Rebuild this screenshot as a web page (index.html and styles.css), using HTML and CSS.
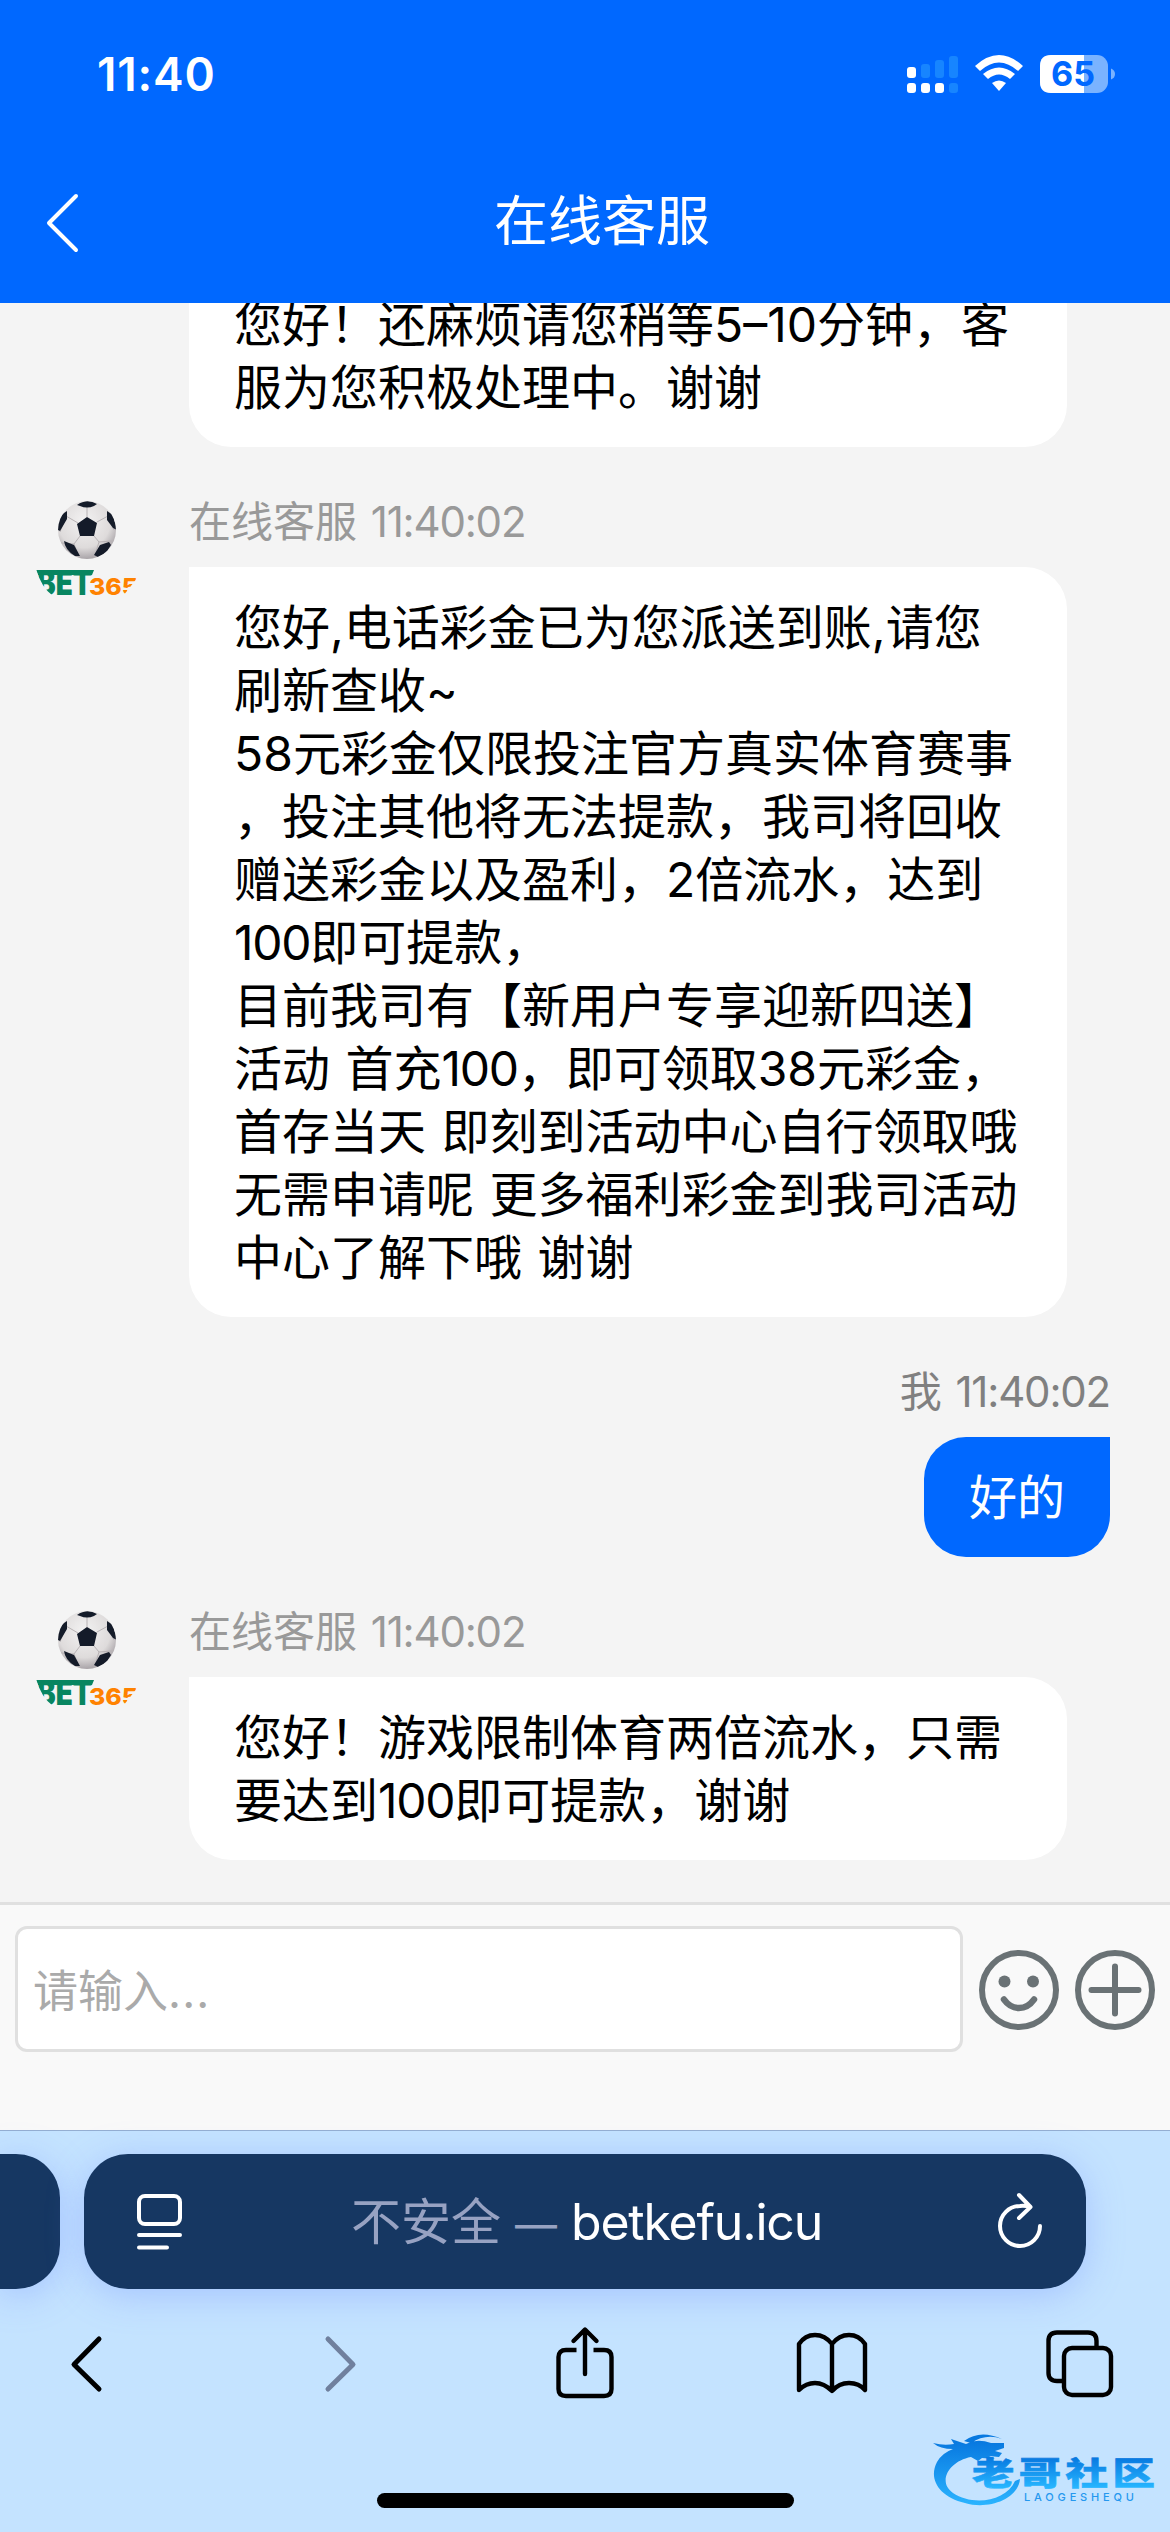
FILE: index.html
```html
<!DOCTYPE html>
<html lang="zh-CN">
<head>
<meta charset="utf-8">
<title>在线客服</title>
<link rel="stylesheet" href="styles.css">
</head>
<body>
<svg class="defs" width="0" height="0" aria-hidden="true">
  <defs>
    <radialGradient id="ballShade" cx="45%" cy="35%" r="65%">
      <stop offset="0" stop-color="#f3f2f2"/>
      <stop offset=".7" stop-color="#dedbdb"/>
      <stop offset="1" stop-color="#a9a4a8"/>
    </radialGradient>
    <clipPath id="ballClip"><circle cx="51" cy="38" r="29"/></clipPath>
    <clipPath id="logoClip"><path d="M0 77H102V85L87 104H17Q5 95 0 77Z"/></clipPath>
    <symbol id="avatar" viewBox="0 0 102 108">
      <circle cx="51" cy="38" r="29" fill="url(#ballShade)"/>
      <g clip-path="url(#ballClip)">
        <path d="M51 25V13M42 31L30 24M61 30L72 24M58 44L63 50M44 44L38 52M38 52L25 51M38 52L44 66M63 50L76 49M63 50L58 66M30 24L24 40M72 24L78 38" stroke="#b7b2b4" stroke-width="1" fill="none"/>
        <path d="M41 32L51 25L61 31L58 44H44ZM41 13Q51 6 61 12L58 14Q51 17 44 14ZM22 38Q20 25 31 19V27L24 39ZM71 19L77 23L81 38L77 36L71 28ZM28 49L38 53L44 64L39 64Q29 58 28 49ZM73 50L64 53L58 63L62 65L70 61L75 53Z" fill="#141b29"/>
      </g>
      <g clip-path="url(#logoClip)">
        <text class="logo-bet" x="1" y="103" textLength="55" lengthAdjust="spacingAndGlyphs">BET</text>
        <path d="M0 78H58L56 83H2Z" fill="#088560"/>
        <text class="logo-num" x="53" y="103" textLength="49" lengthAdjust="spacingAndGlyphs">365</text>
      </g>
    </symbol>
  </defs>
</svg>
<div class="screen">
  <header class="header">
    <div class="status">
      <span class="clock">11:40</span>
      <svg class="indicators" width="212" height="40" viewBox="905 54 212 40">
        <g fill="#fff">
          <rect x="907" y="67" width="9" height="11" rx="3"/>
          <rect x="907" y="83" width="9" height="10" rx="3"/>
          <rect x="921" y="83" width="9" height="10" rx="3"/>
          <rect x="935" y="83" width="9" height="10" rx="3"/>
        </g>
        <g fill="#1785ff">
          <rect x="921" y="64" width="9" height="14" rx="3"/>
          <rect x="935" y="60" width="9" height="18" rx="3"/>
          <rect x="949" y="56" width="9" height="22" rx="3"/>
          <rect x="949" y="83" width="9" height="10" rx="3"/>
        </g>
        <g fill="#fff">
          <path d="M975 66Q999 44 1023 66L1018 71Q999 54 980 71Z"/>
          <path d="M983 74Q999 61 1015 74L1010 79Q999 70 988 79Z"/>
          <path d="M992 83Q999 78 1006 83L999 91Z"/>
        </g>
        <rect x="1040" y="55" width="68" height="38" rx="11" fill="#7ab3ff"/>
        <path d="M1051 55H1084V93H1051Q1040 93 1040 82V66Q1040 55 1051 55Z" fill="#fff"/>
        <path d="M1111 68.500Q1115 70 1115 74T1111 79.500Z" fill="#7ab3ff"/>
        <text class="battery-level" x="1051" y="86" textLength="44" lengthAdjust="spacingAndGlyphs">65</text>
      </svg>
    </div>
    <div class="titlebar">
      <svg class="back" width="40" height="62" viewBox="0 0 40 62"><path d="M33 4L6 31L33 58" fill="none" stroke="#fff" stroke-width="4" stroke-linecap="round" stroke-linejoin="round"/></svg>
      <h1 class="title">在线客服</h1>
    </div>
  </header>

  <main class="chat">
    <section class="message">
      <div class="bubble"><p>您好！还麻烦请您稍等5–10分钟，客</p><p>服为您积极处理中。谢谢</p></div>
    </section>
    <section class="message">
      <svg class="avatar" width="102" height="108"><use href="#avatar"/></svg>
      <div class="meta">在线客服 <time>11:40:02</time></div>
      <div class="bubble">
        <p>您好,电话彩金已为您派送到账,请您</p>
        <p>刷新查收~</p>
        <p>58元彩金仅限投注官方真实体育赛事</p>
        <p>，投注其他将无法提款，我司将回收</p>
        <p>赠送彩金以及盈利，2倍流水，达到</p>
        <p><span class="num">100</span>即可提款，</p>
        <p>目前我司有【新用户专享迎新四送】</p>
        <p>活动 首充<span class="num">100</span>，即可领取38元彩金，</p>
        <p>首存当天 即刻到活动中心自行领取哦</p>
        <p>无需申请呢 更多福利彩金到我司活动</p>
        <p>中心了解下哦 谢谢</p>
      </div>
    </section>
    <section class="message mine">
      <div class="meta">我 <time>11:40:02</time></div>
      <div class="bubble"><p>好的</p></div>
    </section>
    <section class="message">
      <svg class="avatar" width="102" height="108"><use href="#avatar"/></svg>
      <div class="meta">在线客服 <time>11:40:02</time></div>
      <div class="bubble"><p>您好！游戏限制体育两倍流水，只需</p><p>要达到<span class="num">100</span>即可提款，谢谢</p></div>
    </section>
  </main>

  <div class="composer">
    <div class="input">请输入<span class="dots">...</span></div>
    <svg class="tool" width="80" height="80" viewBox="0 0 80 80" fill="none" stroke="#6a7275">
      <circle cx="40" cy="40" r="37" stroke-width="6"/>
      <circle cx="25.500" cy="31.500" r="6" fill="#6a7275" stroke="none"/><circle cx="54" cy="31.500" r="6" fill="#6a7275" stroke="none"/>
      <path d="M25 49.500Q31 58 40 58T55 49.500" stroke-width="6.500" stroke-linecap="round"/>
    </svg>
    <svg class="tool" width="80" height="80" viewBox="0 0 80 80" fill="none" stroke="#6a7275" stroke-width="6">
      <circle cx="40" cy="40" r="37"/>
      <path d="M40 16.500V63.500M16.500 40H63.500" stroke-linecap="round"/>
    </svg>
  </div>

  <footer class="browser">
    <div class="tabs">
      <div class="tab previous"></div>
      <div class="tab current">
        <svg width="46" height="56" viewBox="0 0 46 56" fill="none" stroke="#fff" stroke-width="4" stroke-linecap="round">
          <rect x="3" y="2" width="41" height="28" rx="6"/><path d="M3 41H44M3 53.500H31"/>
        </svg>
        <div class="address"><span class="insecure">不安全 <span class="dash">—</span></span><span class="domain">betkefu.icu</span></div>
        <svg width="46" height="62" viewBox="0 0 46 62" fill="none" stroke="#fff" stroke-width="4" stroke-linecap="round" stroke-linejoin="round">
          <path d="M43 35A20 20 0 1 1 23 15C27 14.500 30 15 33 16M22 4L33.500 16L22 27"/>
        </svg>
      </div>
    </div>
    <nav class="nav">
      <span class="nav-item"><svg width="34" height="58" viewBox="0 0 34 58"><path d="M30 4L5 29.500L30 54" fill="none" stroke="#000" stroke-width="5" stroke-linecap="round" stroke-linejoin="round"/></svg></span>
      <span class="nav-item forward"><svg width="34" height="58" viewBox="0 0 34 58"><path d="M4 4L29 29.500L4 54" fill="none" stroke="#70809e" stroke-width="5" stroke-linecap="round" stroke-linejoin="round"/></svg></span>
      <span class="nav-item share"><svg width="58" height="76" viewBox="0 0 58 76" fill="none" stroke="#000" stroke-width="4.400" stroke-linejoin="round">
        <path d="M20.500 24H10Q2.500 24 2.500 31V63Q2.500 70 10 70H48Q55.500 70 55.500 63V31Q55.500 24 48 24H37.500"/>
        <path d="M29 48V4M17.500 15L29 3.500L40.500 15" stroke-linecap="round"/>
      </svg></span>
      <span class="nav-item"><svg width="72" height="70" viewBox="0 0 72 70" fill="none" stroke="#000" stroke-width="4.400" stroke-linejoin="round">
        <path d="M36 15Q29 6 19 6T3 15V61Q10 54 19 54T36 62Q43 54 53 54T69 61V15Q63 6 53 6T36 15ZM36 15V62"/>
      </svg></span>
      <span class="nav-item"><svg width="68" height="68" viewBox="0 0 68 68" fill="none" stroke="#000" stroke-width="4.400">
        <rect x="18" y="18" width="47" height="47" rx="8"/><path d="M17 51H11Q2.500 51 2.500 43V11Q2.500 2.500 11 2.500H42Q50.500 2.500 50.500 11V17"/>
      </svg></span>
    </nav>
    <div class="home-indicator"></div>
    <svg class="watermark" width="232" height="92" viewBox="0 0 232 92">
      <defs><linearGradient id="wm" gradientUnits="userSpaceOnUse" x1="0" y1="15" x2="0" y2="78">
        <stop offset="0" stop-color="#0879e0"/><stop offset="1" stop-color="#2bb4ff"/></linearGradient>
        <linearGradient id="wmText" gradientUnits="userSpaceOnUse" x1="0" y1="-36" x2="0" y2="3">
        <stop offset="0" stop-color="#0879e0"/><stop offset="1" stop-color="#26b5ff"/></linearGradient></defs>
      <path fill="url(#wm)" d="M4 16Q15 19 25 17L22 12L37 17Q48 11 62 16L75 16V21L66 24L73 26L70 30L60 29L66 32L53 31L49 34L42 30C20 34 8 55 24 66C43 79 77 75 86 54L91 52C89 73 58 83 36 76C10 70 -1 52 8 35Q13 26 24 22Q11 22 4 16ZM35 14Q51 2 73 12Q57 6 42 16Z"/>
      <g transform="translate(43 58) scale(1.01 .76)"><text class="wm-name" x="0" y="0" textLength="181" fill="url(#wmText)" stroke="url(#wmText)">老哥社区</text></g>
      <text class="wm-latin" x="95" y="74" textLength="110">LAOGESHEQU</text>
    </svg>
  </footer>
</div>
</body>
</html>
```
FILE: styles.css
```css
* { box-sizing: border-box; }
body { margin: 0; background: #f4f4f4; font-family: Inter, "Noto Sans CJK SC", sans-serif; }
p, h1 { margin: 0; font-weight: 400; }
svg { display: block; flex: none; }
.defs { position: absolute; }
.screen { width: 1170px; height: 2532px; display: flex; flex-direction: column; overflow: hidden; }

.header { height: 303px; flex: none; background: #0068ff; color: #fff; }
.status { height: 148px; padding: 0 53px 0 97px; display: flex; align-items: center; justify-content: space-between; }
.clock { font-size: 46px; font-weight: 600; line-height: 60px; letter-spacing: 0.8px; }
.battery-level { font: 700 34px Inter, sans-serif; fill: #0068ff; }
.titlebar { height: 150px; padding: 0 43px; display: flex; align-items: center; }
.title { flex: 1; margin: -10px 0 0 2px; padding-right: 8px; text-align: center; font-family: "Noto Sans CJK SC", sans-serif; font-size: 54px; line-height: 80px; }

.chat { height: 1599px; flex: none; padding-bottom: 42px; display: flex; flex-direction: column; justify-content: flex-end; gap: 45px; overflow: hidden; }
.message { display: grid; grid-template-columns: 153px 878px; padding-left: 36px; }
.message > * { grid-column: 2; }
.message .avatar { grid-column: 1; grid-row: 1 / span 2; }
.meta { font-size: 42px; line-height: 60px; margin-bottom: 15px; color: #999; white-space: nowrap; word-spacing: 2px; }
.meta time { letter-spacing: -1.2px; }
.bubble { padding: 28.5px 45px; border-radius: 0 42px 42px 42px; background: #fff; color: #000; font-size: 48px; line-height: 63px; white-space: nowrap; word-spacing: 2px; text-spacing-trim: space-all; }
.bubble p { height: 63px; }
.num { letter-spacing: -1.3px; }
.mine { display: flex; flex-direction: column; align-items: flex-end; padding: 0 60px 0 0; }
.mine .meta { color: #808080; }
.mine .bubble { border-radius: 42px 0 42px 42px; background: #0068ff; color: #fff; }

.composer { height: 228px; flex: none; padding: 21px 15px 0; display: flex; align-items: flex-start; border-top: 3px solid #e0e0e0; background: #f9f9f9; }
.input { width: 948px; height: 126px; padding: 0 15px; border: 3px solid #e0e0e0; border-radius: 12px; background: #fff; color: #aaa; font-size: 45px; line-height: 126px; }
.dots { letter-spacing: 1.2px; }
.tool { margin: 24px 0 0 16px; }

.browser { position: relative; height: 402px; flex: none; padding-top: 23px; border-top: 1px solid #94aed2; background: #c4e3ff; display: flex; flex-direction: column; }
.tabs { display: flex; gap: 24px; }
.tab { height: 135px; background: #163762; box-shadow: 0 6px 36px rgba(120, 150, 255, .4); }
.previous { width: 60px; border-radius: 0 44px 44px 0; }
.current { width: 1002px; padding: 0 43px 0 52px; border-radius: 44px; display: flex; align-items: center; justify-content: space-between; }
.address { display: flex; gap: 14px; padding: 3px 6px 0 0; font-size: 50px; line-height: 70px; color: #fff; white-space: nowrap; }
.insecure { color: #97a2c2; }
.dash { font-size: 42px; }
.domain { letter-spacing: -1.2px; }
.nav { height: 144px; padding: 0 54px 0 50px; margin-top: 3px; display: flex; align-items: center; justify-content: space-between; }
.nav-item { width: 72px; display: flex; justify-content: center; }
.forward { padding-left: 13px; }
.share { padding-left: 4px; }
.home-indicator { width: 417px; height: 15px; margin: 57px auto 0; border-radius: 8px; background: #000; }
.watermark { position: absolute; right: 9px; bottom: 13px; }
.wm-name { font: 900 42px "Noto Sans CJK SC", sans-serif; stroke-width: .8; }
.wm-latin { font: 500 11px Inter, sans-serif; fill: #2598ef; }
.logo-bet { font: 900 34px Inter, sans-serif; fill: #088560; }
.logo-num { font: 800 23px Inter, sans-serif; fill: #ff8200; }
```
